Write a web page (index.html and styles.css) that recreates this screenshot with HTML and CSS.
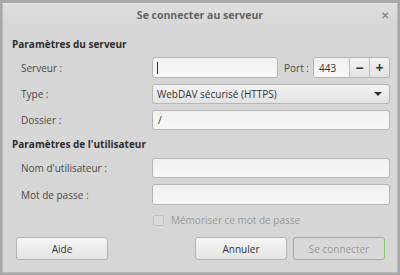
FILE: index.html
```html
<!DOCTYPE html>
<html lang="fr">

<head>
    <meta charset="UTF-8">
    <title>Se connecter au serveur</title>
    <link rel="stylesheet" href="styles.css">
</head>

<body>
    <div class="win">
        <div class="titlebar">
            <span class="title">Se connecter au serveur</span>
            <span class="close">&#x2715;</span>
        </div>
        <div class="content">
            <div class="section">Paramètres du serveur</div>
            <div class="grid grid_server">
                <div class="label">Serveur :</div>
                <div class="server_row">
                    <div class="entry grow"><span class="caret"></span></div>
                    <span class="port_label">Port :</span>
                    <div class="spin">
                        <div class="spin_entry">443</div>
                        <div class="spin_btn">&minus;</div>
                        <div class="spin_btn">+</div>
                    </div>
                </div>
                <div class="label">Type :</div>
                <div class="combo">
                    <span>WebDAV sécurisé (HTTPS)</span>
                    <span class="arrow"></span>
                </div>
                <div class="label">Dossier :</div>
                <div class="entry">/</div>
            </div>

            <div class="section section2">Paramètres de l'utilisateur</div>
            <div class="grid grid_user">
                <div class="label">Nom d'utilisateur :</div>
                <div class="entry"></div>
                <div class="label">Mot de passe :</div>
                <div class="entry"></div>
                <div></div>
                <div class="check_row">
                    <span class="check"></span>
                    <span>Mémoriser ce mot de passe</span>
                </div>
            </div>

            <div class="buttons">
                <button type="button" class="btn">Aide</button>
                <div class="spacer"></div>
                <button type="button" class="btn">Annuler</button>
                <button type="button" class="btn btn_connect">Se connecter</button>
            </div>
        </div>
    </div>
</body>

</html>
```

FILE: styles.css
```css
* {
    box-sizing: border-box;
}

body {
    margin: 0;
    width: 400px;
    height: 275px;
    background-color: #a9a9a9;
    font-family: "Open Sans", "Noto Sans", sans-serif;
    font-size: 10px;
    color: #444;
    overflow: hidden;
}

.win {
    margin: 3px 2px 0 2px;
    height: 270px;
    background-color: #d6d6d6;
    border: 1px solid #b8b8b8;
    border-top-color: #e8e8e8;
}

.titlebar {
    height: 22px;
    display: flex;
    justify-content: center;
    align-items: center;
    position: relative;
    background: linear-gradient(#dedede, #d6d6d6);
}

.title {
    font-weight: bold;
    color: #666;
    font-size: 10.5px;
}

.close {
    position: absolute;
    right: 8px;
    top: 4px;
    font-size: 10px;
    font-weight: bold;
    color: #8a8a8a;
}

.content {
    padding: 0 7px 0 9px;
}

.section {
    margin-top: 10px;
    height: 16px;
    line-height: 16px;
    font-weight: bold;
    color: #2e2e2e;
}

.section2 {
    margin-top: 6px;
}

.grid {
    display: grid;
    grid-template-columns: 131px 1fr;
    row-gap: 6px;
    margin-left: 9px;
}

.grid_server {
    margin-top: 5px;
    grid-template-rows: 21px 20px 20px;
}

.grid_user {
    margin-top: 6px;
    grid-template-rows: 20px 21px 18px;
}

.label {
    display: flex;
    align-items: center;
    color: #4a4a4a;
}

.server_row {
    display: flex;
    align-items: stretch;
}

.grow {
    flex: 1;
}

.entry {
    display: flex;
    align-items: center;
    padding-left: 5px;
    background: linear-gradient(#f0f0f0, #f8f8f8);
    border: 1px solid #b6b6b6;
    border-radius: 3px;
    color: #333;
}

.caret {
    width: 1px;
    height: 12px;
    background-color: #333;
    margin-left: -1px;
}

.port_label {
    display: flex;
    align-items: center;
    margin: 0 4px 0 6px;
    color: #4a4a4a;
}

.spin {
    width: 77px;
    display: flex;
    border: 1px solid #b6b6b6;
    border-radius: 3px;
    overflow: hidden;
}

.spin_entry {
    width: 35px;
    display: flex;
    align-items: center;
    padding-left: 5px;
    background: linear-gradient(#f0f0f0, #f8f8f8);
    color: #333;
}

.spin_btn {
    flex: 1;
    display: flex;
    justify-content: center;
    align-items: center;
    border-left: 1px solid #c2c2c2;
    background: linear-gradient(#f2f2f2, #e2e2e2);
    font-weight: bold;
    font-size: 14px;
    color: #333;
}

.combo {
    display: flex;
    justify-content: space-between;
    align-items: center;
    padding: 0 7px 0 4px;
    background: linear-gradient(#f4f4f4, #e2e2e2);
    border: 1px solid #b6b6b6;
    border-radius: 3px;
    color: #333;
}

.arrow {
    width: 0;
    height: 0;
    border-left: 4px solid transparent;
    border-right: 4px solid transparent;
    border-top: 4px solid #333;
}

.check_row {
    display: flex;
    align-items: center;
    color: #999;
}

.check {
    width: 11px;
    height: 11px;
    margin: 0 7px 0 1px;
    border: 1px solid #c2c2c2;
    border-radius: 2px;
    background-color: #d9d9d9;
}

.buttons {
    display: flex;
    margin: 8px 5px 0 4px;
    gap: 6px;
}

.spacer {
    flex: 1;
}

.btn {
    width: 92px;
    height: 23px;
    padding: 0;
    font-family: inherit;
    font-size: 10px;
    color: #333;
    background: linear-gradient(#f6f6f6, #e4e4e4);
    border: 1px solid #b3b3b3;
    border-radius: 3px;
}

.btn_connect {
    color: #9a9a9a;
    background: #d8d8d8;
    border: 1px solid #8cc071;
}
```
